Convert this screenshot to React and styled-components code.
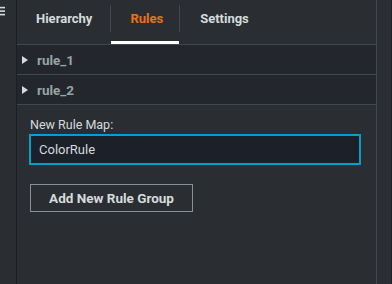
import React, { useState } from "react";
import styled, { createGlobalStyle } from "styled-components";

const Global = createGlobalStyle`
  html, body { margin: 0; padding: 0; background: #2a2e33; }
  body { font-family: Roboto, "Liberation Sans", Arial, sans-serif; }
  * { box-sizing: border-box; }
`;

const Shell = styled.div`
  display: flex;
  width: 392px;
  height: 284px;
  background: #2a2e33;
  overflow: hidden;
`;

const LeftRail = styled.div`
  width: 17px;
  flex: none;
  border-right: 1px solid #1b1e23;
  padding-top: 6px;
`;

const RightRail = styled.div`
  width: 15px;
  flex: none;
  border-right: 1px solid #1f2228;
`;

const Panel = styled.div`
  flex: 1;
  display: flex;
  flex-direction: column;
  border-right: 1px solid #414750;
`;

const TabBar = styled.div`
  display: flex;
  height: 45px;
  border-bottom: 1px solid #414750;
`;

const Tab = styled.button`
  position: relative;
  height: 44px;
  padding: 5px 0 0;
  margin: 0;
  border: none;
  background: transparent;
  cursor: pointer;
  display: flex;
  align-items: flex-start;
  font-family: inherit;
  &::after {
    content: "";
    display: ${(p) => (p.$active ? "block" : "none")};
    position: absolute;
    left: 1px;
    right: 0;
    bottom: 0;
    height: 3px;
    background: #ffffff;
  }
`;

const TabLabel = styled.span`
  display: block;
  height: 27px;
  line-height: 27px;
  padding: 0 ${(p) => p.$pr}px 0 ${(p) => p.$pl}px;
  border-left: 1px solid ${(p) => (p.$sep ? "#414750" : "transparent")};
  font-size: 13px;
  font-weight: 700;
  color: ${(p) => (p.$active ? "#ec7211" : "#d5dbdb")};
`;

const Row = styled.div`
  display: flex;
  align-items: center;
  height: 30px;
  padding-left: 5px;
  background: #23262d;
  border-bottom: 1px solid #414750;
  font-size: 13.5px;
  font-weight: 700;
  color: #95a5a6;
`;

const Caret = styled.span`
  width: 0;
  height: 0;
  border-top: 4px solid transparent;
  border-bottom: 4px solid transparent;
  border-left: 6px solid #d5dbdb;
  margin-right: 9px;
  margin-top: 1px;
`;

const Form = styled.div`
  padding: 12px 13px 0 12px;
  display: flex;
  flex-direction: column;
  align-items: flex-start;
`;

const Label = styled.label`
  font-size: 12.5px;
  line-height: 16px;
  color: #d5dbdb;
  margin-left: 1px;
  margin-bottom: 1px;
`;

const Input = styled.input`
  width: 332px;
  height: 31px;
  padding: 0 8px;
  background: #1b2029;
  border: 2px solid #00a1c9;
  border-radius: 0;
  outline: none;
  color: #d5dbdb;
  font-family: inherit;
  font-size: 13px;
`;

const Button = styled.button`
  margin-top: 19px;
  margin-left: 1px;
  width: 163px;
  height: 28px;
  background: transparent;
  border: 1px solid #879196;
  color: #d5dbdb;
  font-family: inherit;
  font-size: 13.5px;
  font-weight: 700;
  cursor: pointer;
`;

const Menu = () => (
  <svg width="5" height="10" viewBox="0 0 5 10" style={{ display: "block" }}>
    <rect x="0" y="0.8" width="5" height="1.6" fill="#d5dbdb" />
    <rect x="0" y="4.3" width="5" height="1.6" fill="#d5dbdb" />
    <rect x="0" y="7.8" width="5" height="1.6" fill="#d5dbdb" />
  </svg>
);

export default function App() {
  const [tab, setTab] = useState(1);
  const [value, setValue] = useState("ColorRule");
  const tabs = [
    { name: "Hierarchy", pl: 18, pr: 18 },
    { name: "Rules", pl: 19, pr: 16 },
    { name: "Settings", pl: 20, pr: 20 },
  ];
  return (
    <Shell>
      <Global />
      <LeftRail>
        <Menu />
      </LeftRail>
      <Panel>
        <TabBar>
          {tabs.map((t, i) => (
            <Tab key={t.name} $active={tab === i} onClick={() => setTab(i)}>
              <TabLabel $active={tab === i} $sep={i > 0} $pl={t.pl} $pr={t.pr}>
                {t.name}
              </TabLabel>
            </Tab>
          ))}
        </TabBar>
        <Row>
          <Caret />
          rule_1
        </Row>
        <Row>
          <Caret />
          rule_2
        </Row>
        <Form>
          <Label>New Rule Map:</Label>
          <Input value={value} onChange={(e) => setValue(e.target.value)} />
          <Button>Add New Rule Group</Button>
        </Form>
      </Panel>
      <RightRail />
    </Shell>
  );
}
